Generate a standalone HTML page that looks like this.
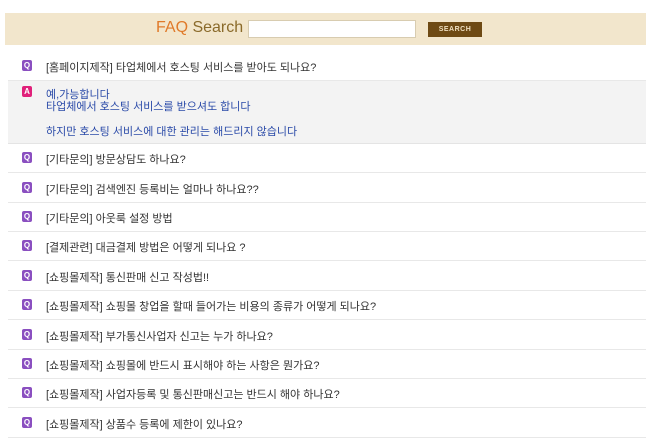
<!DOCTYPE html>
<html><head><meta charset="utf-8"><style>
body{margin:0;width:650px;height:419px;overflow:hidden;background:#fff;font-family:"Liberation Sans","Noto Sans CJK KR",sans-serif;}
.hd{position:absolute;left:5px;top:13px;width:641px;height:32px;background:#f2e6cc;}
.hd .t{position:absolute;left:151px;top:6px;font-size:16px;color:#8a6a2a;}
.hd .t b{font-weight:normal;color:#e07a2a;}
.hd .in{position:absolute;left:243px;top:7px;width:166px;height:16px;background:#fff;border:1px solid #d8ccb0;}
.hd .bt{position:absolute;left:423px;top:9px;width:54px;height:15px;background:#6e4a14;color:#f0e0c0;font-size:7px;font-weight:bold;text-align:center;line-height:15px;letter-spacing:.5px;}
.r{position:absolute;left:8px;width:638px;border-bottom:1px solid #e8e8e8;height:29px;}
.ic{position:absolute;left:14px;width:10px;height:11px;border-radius:2px;color:#fff;font-size:8px;font-weight:bold;text-align:center;line-height:11px;}
.q{background:#8a4fc0;}
.a{background:#e0207a;}
.tx{position:absolute;left:38px;font-size:11px;color:#333;white-space:nowrap;}
.ans{position:absolute;left:8px;top:81px;width:638px;height:62px;background:#f3f3f3;border-bottom:1px solid #e4e4e4;}
.ans .tx{color:#2a4aa8;}
</style></head><body>
<div class="hd"><div class="t"><b>FAQ</b> Search</div><div class="in"></div><div class="bt">SEARCH</div></div>
<div class="r" style="top:51px"><div class="ic q" style="top:9px">Q</div><div class="tx" style="top:8px">[홈페이지제작] 타업체에서 호스팅 서비스를 받아도 되나요?</div></div>
<div class="ans"><div class="ic a" style="top:5px">A</div>
<div class="tx" style="top:5px">예,가능합니다</div>
<div class="tx" style="top:17px">타업체에서 호스팅 서비스를 받으셔도 합니다</div>
<div class="tx" style="top:42px">하지만 호스팅 서비스에 대한 관리는 해드리지 않습니다</div></div>
<div class="r" style="top:143px"><div class="ic q" style="top:9px">Q</div><div class="tx" style="top:8px">[기타문의] 방문상담도 하나요?</div></div>
<div class="r" style="top:173px"><div class="ic q" style="top:9px">Q</div><div class="tx" style="top:8px">[기타문의] 검색엔진 등록비는 얼마나 하나요??</div></div>
<div class="r" style="top:202px"><div class="ic q" style="top:9px">Q</div><div class="tx" style="top:8px">[기타문의] 아웃룩 설정 방법</div></div>
<div class="r" style="top:231px"><div class="ic q" style="top:9px">Q</div><div class="tx" style="top:8px">[결제관련] 대금결제 방법은 어떻게 되나요 ?</div></div>
<div class="r" style="top:261px"><div class="ic q" style="top:9px">Q</div><div class="tx" style="top:8px">[쇼핑몰제작] 통신판매 신고 작성법!!</div></div>
<div class="r" style="top:290px"><div class="ic q" style="top:9px">Q</div><div class="tx" style="top:8px">[쇼핑몰제작] 쇼핑몰 창업을 할때 들어가는 비용의 종류가 어떻게 되나요?</div></div>
<div class="r" style="top:320px"><div class="ic q" style="top:9px">Q</div><div class="tx" style="top:8px">[쇼핑몰제작] 부가통신사업자 신고는 누가 하나요?</div></div>
<div class="r" style="top:349px"><div class="ic q" style="top:9px">Q</div><div class="tx" style="top:8px">[쇼핑몰제작] 쇼핑몰에 반드시 표시해야 하는 사항은 뭔가요?</div></div>
<div class="r" style="top:378px"><div class="ic q" style="top:9px">Q</div><div class="tx" style="top:8px">[쇼핑몰제작] 사업자등록 및 통신판매신고는 반드시 해야 하나요?</div></div>
<div class="r" style="top:408px"><div class="ic q" style="top:9px">Q</div><div class="tx" style="top:8px">[쇼핑몰제작] 상품수 등록에 제한이 있나요?</div></div>
</body></html>
